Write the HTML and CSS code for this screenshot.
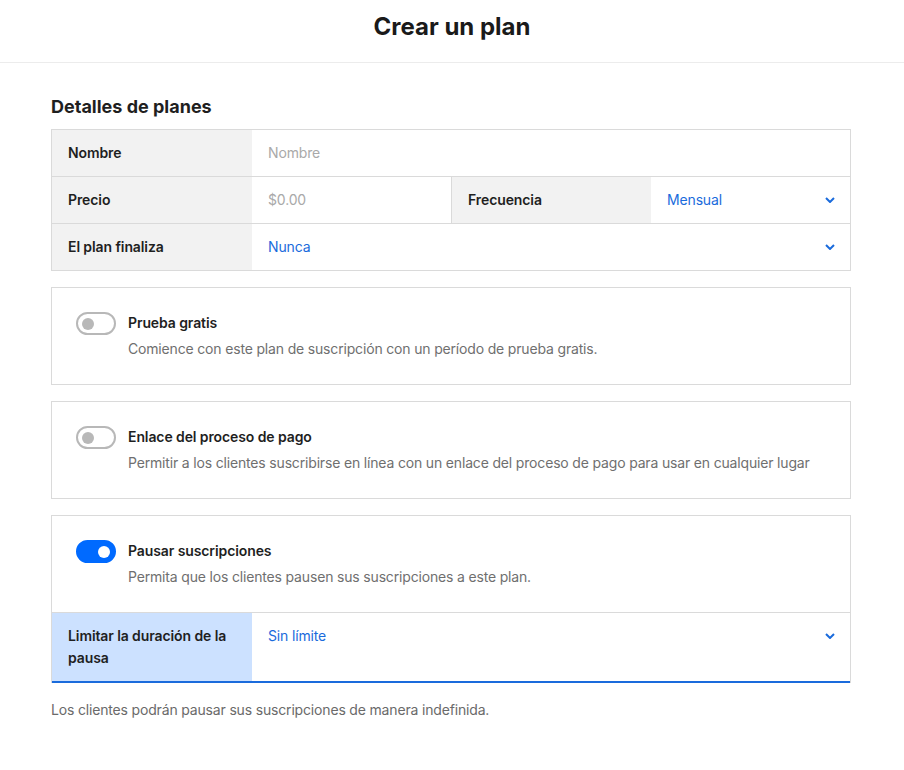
FILE: index.html
```html
<!DOCTYPE html>
<html lang="es">
<head>
<meta charset="utf-8">
<title>Crear un plan</title>
<link rel="stylesheet" href="styles.css">
</head>
<body>
<header class="topbar">
  <h1 class="page-title">Crear un plan</h1>
</header>
<main class="content">
  <h2 class="section-title">Detalles de planes</h2>
  <div class="table">
    <div class="row">
      <div class="label">Nombre</div>
      <div class="field placeholder">Nombre</div>
    </div>
    <div class="row">
      <div class="label">Precio</div>
      <div class="field placeholder">$0.00</div>
      <div class="label label-sep">Frecuencia</div>
      <div class="field select">Mensual
        <svg class="chev" viewBox="0 0 10 6" width="10" height="6"><path d="M1 1l4 4 4-4" fill="none" stroke="currentColor" stroke-width="2"/></svg>
      </div>
    </div>
    <div class="row">
      <div class="label">El plan finaliza</div>
      <div class="field select">Nunca
        <svg class="chev" viewBox="0 0 10 6" width="10" height="6"><path d="M1 1l4 4 4-4" fill="none" stroke="currentColor" stroke-width="2"/></svg>
      </div>
    </div>
  </div>

  <div class="card">
    <div class="card-body">
      <span class="toggle"><span class="knob"></span></span>
      <div class="card-text">
        <div class="card-title">Prueba gratis</div>
        <div class="card-desc">Comience con este plan de suscripción con un período de prueba gratis.</div>
      </div>
    </div>
  </div>

  <div class="card">
    <div class="card-body">
      <span class="toggle"><span class="knob"></span></span>
      <div class="card-text">
        <div class="card-title">Enlace del proceso de pago</div>
        <div class="card-desc">Permitir a los clientes suscribirse en línea con un enlace del proceso de pago para usar en cualquier lugar</div>
      </div>
    </div>
  </div>

  <div class="card">
    <div class="card-body">
      <span class="toggle on"><span class="knob"></span></span>
      <div class="card-text">
        <div class="card-title">Pausar suscripciones</div>
        <div class="card-desc">Permita que los clientes pausen sus suscripciones a este plan.</div>
      </div>
    </div>
    <div class="row row-active">
      <div class="label label-active">Limitar la duración de la pausa</div>
      <div class="field select select-top">Sin límite
        <svg class="chev" viewBox="0 0 10 6" width="10" height="6"><path d="M1 1l4 4 4-4" fill="none" stroke="currentColor" stroke-width="2"/></svg>
      </div>
    </div>
  </div>
  <p class="note">Los clientes podrán pausar sus suscripciones de manera indefinida.</p>
</main>
</body>
</html>
```
FILE: styles.css
```css
* { box-sizing: border-box; }
body {
  margin: 0;
  font-family: Inter, "Noto Sans", "Liberation Sans", sans-serif;
  font-size: 14px;
  line-height: 22px;
  color: #1f1f1f;
  background: #fff;
}
.topbar {
  height: 63px;
  border-bottom: 1px solid #ececec;
  display: flex;
  align-items: center;
  justify-content: center;
}
.page-title {
  margin: 0 0 8px;
  font-size: 24px;
  font-weight: 700;
  line-height: 30px;
  color: #1a1a1a;
}
.content {
  width: 800px;
  margin: 0 53px 0 51px;
  padding-top: 32px;
}
.section-title {
  margin: 0 0 10px;
  font-size: 18px;
  font-weight: 700;
  line-height: 24px;
}
.table {
  border: 1px solid #dadada;
  border-bottom: none;
}
.row {
  display: flex;
  border-bottom: 1px solid #dadada;
}
.label {
  width: 200px;
  flex: none;
  background: #f2f2f2;
  padding: 12px 16px;
  font-weight: 600;
  letter-spacing: -0.1px;
}
.label-sep { border-left: 1px solid #dadada; }
.field {
  flex: 1;
  padding: 12px 15px 12px 16px;
  display: flex;
  align-items: center;
  justify-content: space-between;
  letter-spacing: -0.15px;
}
.placeholder { color: #a9a9a9; }
.select { color: #1a6bdc; }
.select-top { align-items: flex-start; }
.select-top .chev { margin-top: 8px; }
.chev { color: #1a6bdc; flex: none; }
.card {
  border: 1px solid #dadada;
  margin-top: 16px;
}
.card-body {
  display: flex;
  padding: 24px;
  gap: 12px;
}
.toggle {
  width: 40px;
  height: 23px;
  border-radius: 12px;
  border: 2px solid #b8b8b8;
  flex: none;
  display: flex;
  align-items: center;
  padding: 0 4px;
}
.toggle .knob {
  width: 12px;
  height: 12px;
  border-radius: 50%;
  background: #b8b8b8;
}
.toggle.on {
  background: #006aff;
  border-color: #006aff;
  justify-content: flex-end;
}
.toggle.on .knob { background: #fff; }
.card-title { font-weight: 600; letter-spacing: -0.1px; }
.card-desc { color: #6f6f6f; margin-top: 4px; letter-spacing: -0.17px; }
.row-active {
  border-top: 1px solid #dadada;
  border-bottom: 2px solid #1a6bdc;
  margin-bottom: -1px;
}
.label-active { background: #cce1ff; }
.note {
  margin: 16px 0 0;
  color: #6a6a6a;
  letter-spacing: -0.17px;
}
```
